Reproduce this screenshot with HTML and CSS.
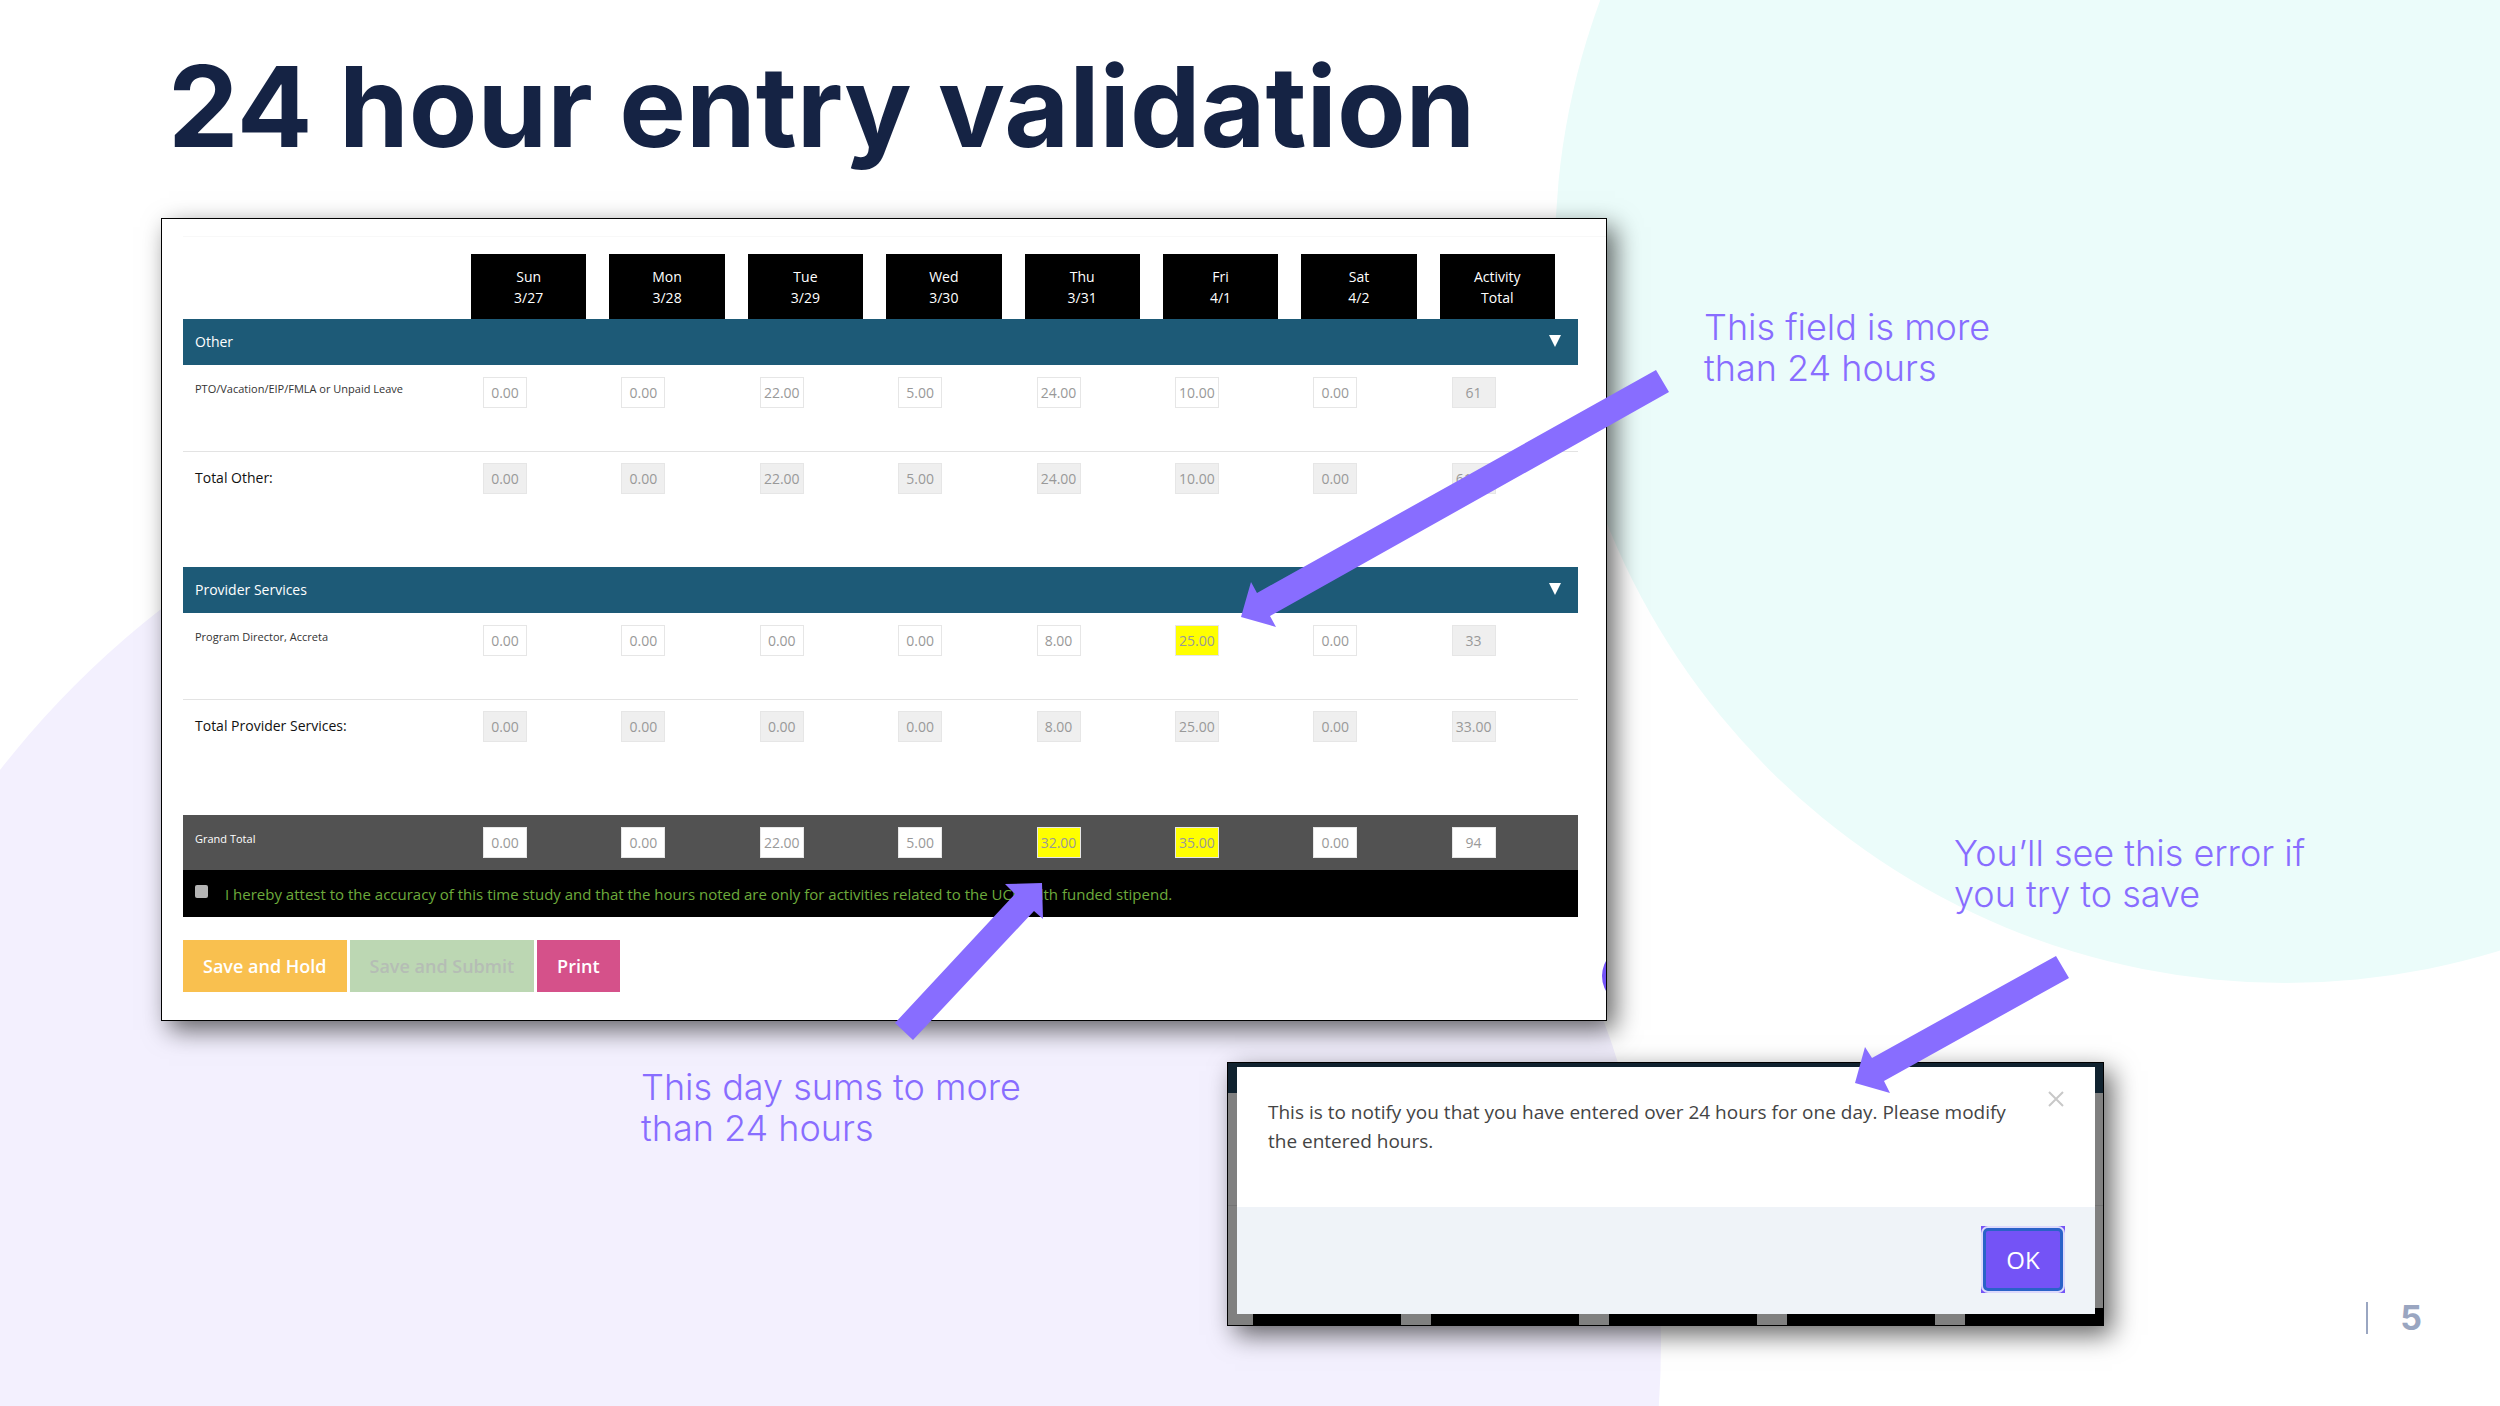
FILE: index.html
```
<!DOCTYPE html>
<html lang="en">
<head>
<meta charset="UTF-8">
<title>24 hour entry validation</title>
<link rel="stylesheet" href="styles.css">
</head>
<body>

<div class="slide">
  <!-- background circles -->
  <svg class="backdrop" viewBox="0 0 2500 1406" aria-hidden="true">
    <circle cx="2285" cy="253" r="730" fill="#ebfcfa"/>
    <circle cx="732" cy="1342" r="929" fill="#f3f0fe"/>
  </svg>

  <h1>24 hour entry validation</h1>

  <div class="upper">
    <!-- time study form -->
    <form class="panel" id="timeStudy">
      <span class="bubble"></span>
      <div class="sheet">
        <table>
          <colgroup>
            <col class="col-label">
            <col span="8">
          </colgroup>
          <thead>
            <tr>
              <td></td>
              <th><div>Sun<br>3/27</div></th>
              <th><div>Mon<br>3/28</div></th>
              <th><div>Tue<br>3/29</div></th>
              <th><div>Wed<br>3/30</div></th>
              <th><div>Thu<br>3/31</div></th>
              <th><div>Fri<br>4/1</div></th>
              <th><div>Sat<br>4/2</div></th>
              <th><div>Activity<br>Total</div></th>
            </tr>
          </thead>

          <!-- Other -->
          <tbody>
            <tr class="section">
              <th colspan="9">
                <div class="section-bar">Other
                  <button type="button" class="toggle" aria-label="Collapse Other"><svg width="12" height="12" viewBox="0 0 12 12"><path d="M0 0h12L6 12z" fill="#fff"/></svg></button>
                </div>
              </th>
            </tr>
            <tr class="entry">
              <th>PTO/Vacation/EIP/FMLA or Unpaid Leave</th>
              <td><input type="text" aria-label="PTO Sun" value="0.00"></td>
              <td><input type="text" aria-label="PTO Mon" value="0.00"></td>
              <td><input type="text" aria-label="PTO Tue" value="22.00"></td>
              <td><input type="text" aria-label="PTO Wed" value="5.00"></td>
              <td><input type="text" aria-label="PTO Thu" value="24.00"></td>
              <td><input type="text" aria-label="PTO Fri" value="10.00"></td>
              <td><input type="text" aria-label="PTO Sat" value="0.00"></td>
              <td><input type="text" aria-label="PTO total" value="61" readonly></td>
            </tr>
            <tr class="total">
              <th>Total Other:</th>
              <td><input type="text" aria-label="Other total Sun" value="0.00" readonly></td>
              <td><input type="text" aria-label="Other total Mon" value="0.00" readonly></td>
              <td><input type="text" aria-label="Other total Tue" value="22.00" readonly></td>
              <td><input type="text" aria-label="Other total Wed" value="5.00" readonly></td>
              <td><input type="text" aria-label="Other total Thu" value="24.00" readonly></td>
              <td><input type="text" aria-label="Other total Fri" value="10.00" readonly></td>
              <td><input type="text" aria-label="Other total Sat" value="0.00" readonly></td>
              <td><input type="text" aria-label="Other total" value="61.00" readonly></td>
            </tr>
          </tbody>

          <!-- Provider Services -->
          <tbody>
            <tr class="section">
              <th colspan="9">
                <div class="section-bar">Provider Services
                  <button type="button" class="toggle" aria-label="Collapse Provider Services"><svg width="12" height="12" viewBox="0 0 12 12"><path d="M0 0h12L6 12z" fill="#fff"/></svg></button>
                </div>
              </th>
            </tr>
            <tr class="entry">
              <th>Program Director, Accreta</th>
              <td><input type="text" aria-label="Director Sun" value="0.00"></td>
              <td><input type="text" aria-label="Director Mon" value="0.00"></td>
              <td><input type="text" aria-label="Director Tue" value="0.00"></td>
              <td><input type="text" aria-label="Director Wed" value="0.00"></td>
              <td><input type="text" aria-label="Director Thu" value="8.00"></td>
              <td><input type="text" aria-label="Director Fri" value="25.00" class="over"></td>
              <td><input type="text" aria-label="Director Sat" value="0.00"></td>
              <td><input type="text" aria-label="Director total" value="33" readonly></td>
            </tr>
            <tr class="total">
              <th>Total Provider Services:</th>
              <td><input type="text" aria-label="Provider total Sun" value="0.00" readonly></td>
              <td><input type="text" aria-label="Provider total Mon" value="0.00" readonly></td>
              <td><input type="text" aria-label="Provider total Tue" value="0.00" readonly></td>
              <td><input type="text" aria-label="Provider total Wed" value="0.00" readonly></td>
              <td><input type="text" aria-label="Provider total Thu" value="8.00" readonly></td>
              <td><input type="text" aria-label="Provider total Fri" value="25.00" readonly></td>
              <td><input type="text" aria-label="Provider total Sat" value="0.00" readonly></td>
              <td><input type="text" aria-label="Provider total" value="33.00" readonly></td>
            </tr>
          </tbody>

          <tfoot>
            <tr class="grand">
              <th>Grand Total</th>
              <td><input type="text" aria-label="Grand total Sun" value="0.00"></td>
              <td><input type="text" aria-label="Grand total Mon" value="0.00"></td>
              <td><input type="text" aria-label="Grand total Tue" value="22.00"></td>
              <td><input type="text" aria-label="Grand total Wed" value="5.00"></td>
              <td><input type="text" aria-label="Grand total Thu" value="32.00" class="over"></td>
              <td><input type="text" aria-label="Grand total Fri" value="35.00" class="over"></td>
              <td><input type="text" aria-label="Grand total Sat" value="0.00"></td>
              <td><input type="text" aria-label="Grand total" value="94"></td>
            </tr>
          </tfoot>
        </table>

        <div class="attest">
          <input type="checkbox" id="attest">
          <label for="attest">I hereby attest to the accuracy of this time study and that the hours noted are only for activities related to the UCHealth funded stipend.</label>
        </div>

        <div class="actions">
          <button type="button" class="btn hold">Save and Hold</button>
          <button type="submit" class="btn submit" disabled>Save and Submit</button>
          <button type="button" class="btn print">Print</button>
        </div>
      </div>
    </form>

    <div class="notes">
      <p class="note note-field">This field is more<br>than 24 hours</p>
      <p class="note note-error">You’ll see this error if<br>you try to save</p>
    </div>
  </div>

  <div class="lower">
    <p class="note note-day">This day sums to more<br>than 24 hours</p>

    <!-- error dialog -->
    <div class="backing">
      <div class="dialog" role="alertdialog" aria-labelledby="dialogText">
        <div class="dialog-body">
          <p id="dialogText">This is to notify you that you have entered over 24 hours for one day. Please modify the entered hours.</p>
          <button type="button" class="close" aria-label="Close"><svg width="16" height="16" viewBox="0 0 16 16"><path d="M1 1l14 14M15 1L1 15" stroke="#c8c8c8" stroke-width="2"/></svg></button>
        </div>
        <div class="dialog-footer">
          <span class="ok-frame"><button type="button" class="ok">OK</button></span>
        </div>
      </div>
    </div>

    <div class="page-number">5</div>
  </div>

  <!-- arrows -->
  <svg class="arrows" viewBox="0 0 2500 1406" aria-hidden="true">
    <path d="M1241 617L1251 582L1257 593L1656 370L1669 392L1270 616L1276 627z"/>
    <path d="M1042 883L1005 884L1015 894L895 1023L913 1040L1034 911L1043 919z"/>
    <path d="M1855 1083L1865 1047L1872 1058L2056 956L2069 978L1884 1081L1890 1093z"/>
  </svg>
</div>

</body>
</html>
```
FILE: styles.css
```
:root{
  --navy: #152344;
  --violet: #886dff;
  --teal: #1d5a77;
  --muted: #9aa6c1;
}
*{ box-sizing:border-box; }

body{
  margin:0;
  font-family:"Open Sans", "Noto Sans", sans-serif;
  background:#fff;
}

.slide{
  position:relative;
  min-height:100vh;
  overflow:hidden;
}

/* circles behind, arrows in front */
.backdrop,
.arrows{
  position:absolute;
  top:0; left:0;
  width:100%;
}
.arrows{
  fill:var(--violet);
  pointer-events:none;
}

h1{
  position:relative;
  margin:0;
  padding:42px 0 48px 168px;
  font-family:Inter, sans-serif;
  font-size:112px;
  line-height:128px;
  font-weight:700;
  color:var(--navy);
}

.upper{
  position:relative;
  display:grid;
  grid-template-columns:1446fr 893fr;
  margin-left:161px;
}
.lower{
  position:relative;
  display:grid;
  grid-template-columns:1066fr 877fr 396fr;
  margin:41px 0 0 161px;
}

/* callout texts */
.note{
  margin:0;
  font-family:Inter, sans-serif;
  font-size:36px;
  line-height:41px;
  font-weight:300;
  color:var(--violet);
}
.notes{ padding-left:97px; }
.note-field{ padding-top:89px; }
.note-error{ padding:444px 0 0 250px; }
.note-day{ padding:5px 0 0 480px; }

/* time study form */
.panel{
  position:relative;
  background:#fff;
  border:1px solid #000;
  box-shadow:8px 9px 24px rgba(0,0,0,.6);
  padding:17px 0 28px 21px;
  overflow:hidden;
}
.bubble{
  position:absolute;
  right:-56px; bottom:14px;
  width:60px; height:60px;
  border-radius:50%;
  background:#7453f6;
}
.sheet{
  border-top:1px solid #f8f8f8;
  padding:17px 28px 0 0;
}

table{
  width:100%;
  table-layout:fixed;
  border-collapse:collapse;
  font-size:14px;
  line-height:21px;
}
.col-label{ width:288px; }
th, td{
  padding:0;
  font-weight:400;
  text-align:left;
  vertical-align:top;
}
thead th div{
  height:65px;
  margin-right:23px;
  padding-top:12px;
  background:#000;
  color:#fff;
  text-align:center;
}

.section-bar{
  display:flex;
  justify-content:space-between;
  align-items:center;
  height:46px;
  padding:0 17px 2px 12px;
  background:var(--teal);
  color:#fff;
}
.toggle{
  display:flex;
  padding:0;
  border:0;
  background:none;
}

.entry th, .entry td,
.total th, .total td,
.grand th, .grand td{ padding:12px 0 0 12px; }
.entry{
  height:86px;
  border-bottom:1px solid #e3e3e3;
}
.entry th, .grand th{
  padding-top:13px;
  font-size:11px;
  color:#333;
}
.total{ height:116px; }
.total th{
  padding-top:15px;
  color:#111;
  font-weight:500;
}
.total td{ padding-top:11px; }
.grand{
  height:55px;
  background:#525252;
}
.grand th{ color:#fff; }

table input{
  display:block;
  width:44px;
  height:31px;
  padding:0;
  border:1px solid #e6e6e6;
  background:#fff;
  font:inherit;
  color:#999;
  text-align:center;
}
table input:read-only{ background:#efefef; }
table input.over{ background:#ff0; }

.attest{
  display:flex;
  align-items:center;
  height:47px;
  padding:0 12px;
  background:#000;
  color:#6dab3c;
  font-size:15px;
}
.attest input{
  appearance:none;
  width:13px; height:13px;
  margin:0 17px 4px 0;
  border-radius:2px;
  background:#b4b4b4;
}

.actions{
  display:flex;
  gap:3px;
  margin-top:23px;
}
.btn{
  height:52px;
  padding:0 20px;
  border:0;
  font:600 18px "Open Sans", sans-serif;
  color:#fff;
}
.hold{ background:#f9c04f; }
.submit{ background:#bcd7b3; color:#b5bdb5; }
.print{ background:#d5518a; }

/* dialog over the dimmed page */
.backing{
  padding:4px 8px 11px 9px;
  border:1px solid #000;
  background:
    linear-gradient(#000,#000) right bottom / 8px 17px no-repeat,
    repeating-linear-gradient(90deg,#808080 0 25px,#000 25px 173px,#808080 173px 178px) left bottom / 100% 11px no-repeat,
    linear-gradient(#10222f 30px,#808080 30px 142px,#747474 142px 143px,#808080 143px);
  box-shadow:8px 9px 24px rgba(0,0,0,.6);
}
.dialog-body{
  display:flex;
  justify-content:space-between;
  height:140px;
  padding:24px 31px 0;
  background:#fff;
}
.dialog-body p{
  flex:0 1 760px;
  margin:7px 0 0;
  font-size:19px;
  line-height:29px;
  color:#444;
}
.close{
  display:flex;
  align-self:flex-start;
  padding:0;
  border:0;
  background:none;
}
.dialog-footer{
  display:flex;
  justify-content:flex-end;
  height:107px;
  padding:19px 30px 0;
  background:#eff3f8;
}
/* focus ring leaves the frame showing in its corners */
.ok-frame{
  height:67px;
  padding:2px;
  background:#7453f6;
}
.ok{
  display:block;
  width:80px; height:63px;
  padding:0;
  border:3px solid #2a62c8;
  border-radius:5px;
  background:#7453f6;
  box-shadow:0 0 0 2px #dcd8fc;
  font:24px "Open Sans", sans-serif;
  color:#fff;
}

.page-number{
  align-self:end;
  justify-self:end;
  margin:0 78px -8px 0;
  padding-left:32px;
  border-left:2px solid var(--muted);
  font-family:Inter, sans-serif;
  font-size:34px;
  line-height:32px;
  font-weight:700;
  color:var(--muted);
}
```
